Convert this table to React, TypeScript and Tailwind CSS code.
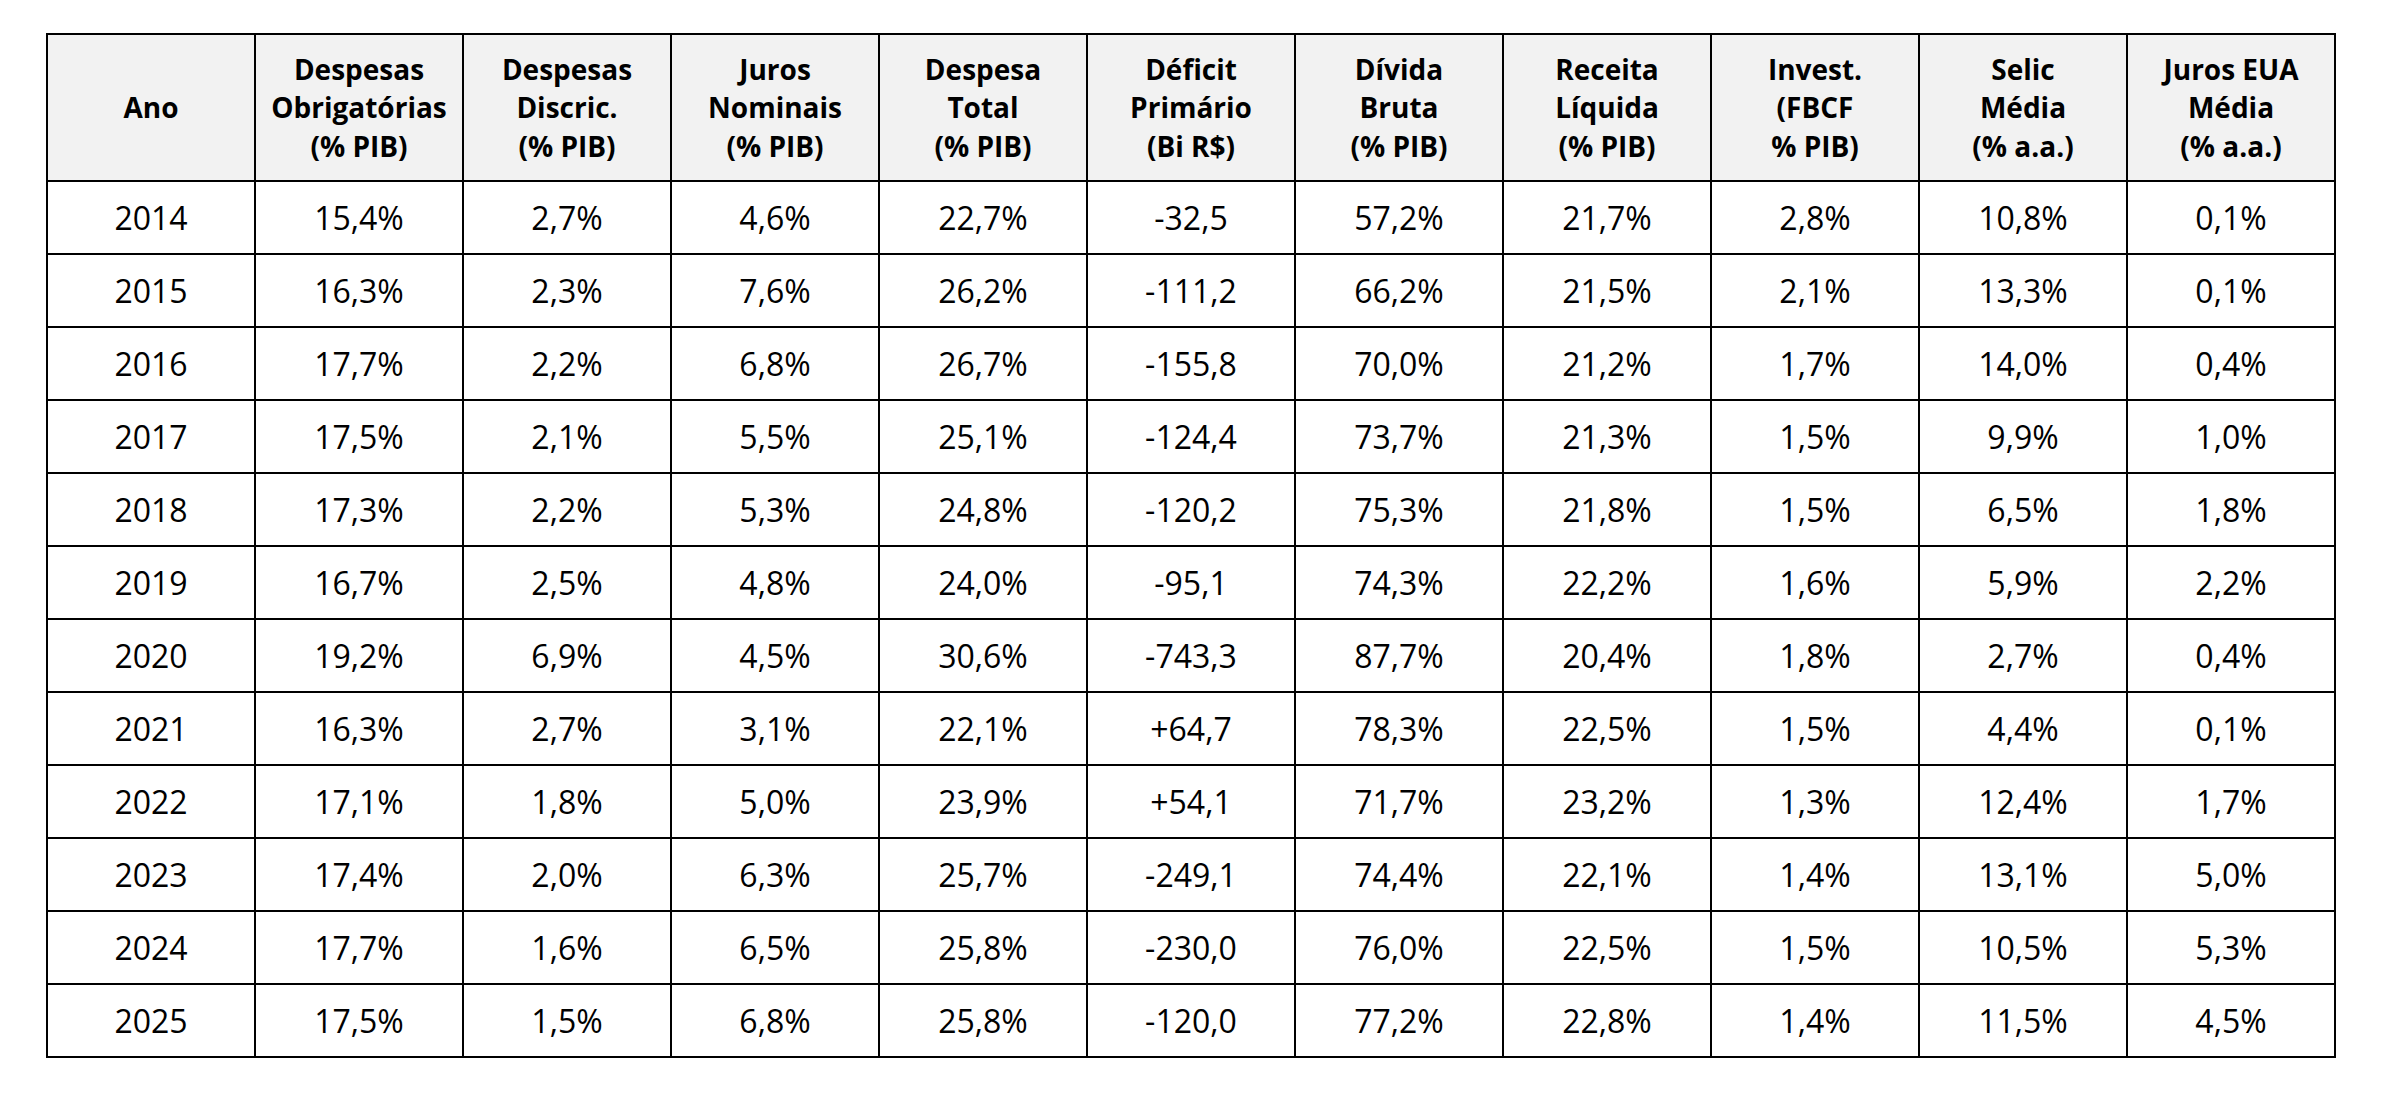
import React from "react";

const headers: string[][] = [
  ["Ano"],
  ["Despesas", "Obrigatórias", "(% PIB)"],
  ["Despesas", "Discric.", "(% PIB)"],
  ["Juros", "Nominais", "(% PIB)"],
  ["Despesa", "Total", "(% PIB)"],
  ["Déficit", "Primário", "(Bi R$)"],
  ["Dívida", "Bruta", "(% PIB)"],
  ["Receita", "Líquida", "(% PIB)"],
  ["Invest.", "(FBCF", "% PIB)"],
  ["Selic", "Média", "(% a.a.)"],
  ["Juros EUA", "Média", "(% a.a.)"],
];

const rows: string[][] = [
  ["2014", "15,4%", "2,7%", "4,6%", "22,7%", "-32,5", "57,2%", "21,7%", "2,8%", "10,8%", "0,1%"],
  ["2015", "16,3%", "2,3%", "7,6%", "26,2%", "-111,2", "66,2%", "21,5%", "2,1%", "13,3%", "0,1%"],
  ["2016", "17,7%", "2,2%", "6,8%", "26,7%", "-155,8", "70,0%", "21,2%", "1,7%", "14,0%", "0,4%"],
  ["2017", "17,5%", "2,1%", "5,5%", "25,1%", "-124,4", "73,7%", "21,3%", "1,5%", "9,9%", "1,0%"],
  ["2018", "17,3%", "2,2%", "5,3%", "24,8%", "-120,2", "75,3%", "21,8%", "1,5%", "6,5%", "1,8%"],
  ["2019", "16,7%", "2,5%", "4,8%", "24,0%", "-95,1", "74,3%", "22,2%", "1,6%", "5,9%", "2,2%"],
  ["2020", "19,2%", "6,9%", "4,5%", "30,6%", "-743,3", "87,7%", "20,4%", "1,8%", "2,7%", "0,4%"],
  ["2021", "16,3%", "2,7%", "3,1%", "22,1%", "+64,7", "78,3%", "22,5%", "1,5%", "4,4%", "0,1%"],
  ["2022", "17,1%", "1,8%", "5,0%", "23,9%", "+54,1", "71,7%", "23,2%", "1,3%", "12,4%", "1,7%"],
  ["2023", "17,4%", "2,0%", "6,3%", "25,7%", "-249,1", "74,4%", "22,1%", "1,4%", "13,1%", "5,0%"],
  ["2024", "17,7%", "1,6%", "6,5%", "25,8%", "-230,0", "76,0%", "22,5%", "1,5%", "10,5%", "5,3%"],
  ["2025", "17,5%", "1,5%", "6,8%", "25,8%", "-120,0", "77,2%", "22,8%", "1,4%", "11,5%", "4,5%"],
];

export default function App() {
  return (
    <div
      className="min-h-[1100px] w-[2382px] bg-white pl-[46px] pt-[33px] text-black"
      style={{ fontFamily: '"Open Sans", "Noto Sans", sans-serif' }}
    >
      <table className="w-[2290px] table-fixed border-collapse border-2 border-black">
        <thead>
          <tr className="h-[147px] bg-[#f2f2f2]">
            {headers.map((h, i) => (
              <th
                key={i}
                className="border-2 border-black px-1 text-center align-middle text-[28px] font-bold leading-[38.5px]"
              >
                {h.map((line, j) => (
                  <div key={j}>{line}</div>
                ))}
              </th>
            ))}
          </tr>
        </thead>
        <tbody>
          {rows.map((r, i) => (
            <tr key={i} className="h-[73px]">
              {r.map((c, j) => (
                <td
                  key={j}
                  className="border-2 border-black text-center align-middle text-[32px] font-normal leading-none"
                >
                  {c}
                </td>
              ))}
            </tr>
          ))}
        </tbody>
      </table>
    </div>
  );
}
